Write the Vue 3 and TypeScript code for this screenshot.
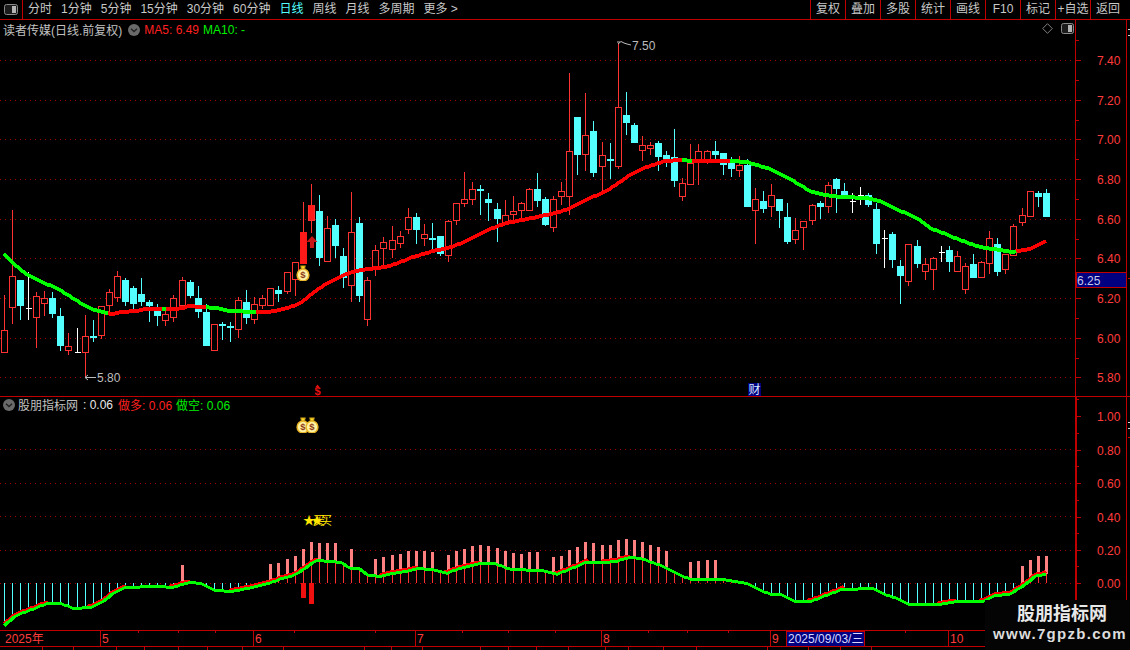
<script setup lang="ts">
type Kind = 'r' | 'c' | 'w' | 'R'
type Bar = [Kind, number, number, number, number]
type Pt = [number, number]

const raw: Bar[] = [
  ['r',295,330,352,353],['r',210,276,307,324],['c',280,280,306,320],['w',272,308,308,320],['r',292,296,317,348],
  ['r',291,298,303,316],['c',292,298,314,318],['c',308,316,346,351],['r',333,346,350,355],['w',328,352,352,353],
  ['r',315,336,352,377],['c',320,336,338,342],['r',306,306,335,339],['r',289,292,305,313],['r',271,276,297,302],
  ['c',278,280,302,306],['c',286,288,304,310],['c',278,294,302,306],['c',300,302,306,322],['c',304,311,316,326],
  ['r',309,314,320,326],['r',295,298,317,322],['r',277,280,305,307],['c',280,282,296,298],['c',286,298,312,318],
  ['c',304,312,346,346],['r',324,324,350,350],['c',322,324,326,340],['c',322,326,328,342],['r',297,300,329,338],
  ['c',290,302,318,324],['r',297,304,319,324],['r',295,298,305,309],['r',288,288,305,305],['c',286,290,294,302],
  ['r',272,272,291,294],['r',262,262,279,296],['R',202,232,264,264],['r',184,205,220,233],['c',195,211,258,266],
  ['r',216,228,261,262],['c',219,225,246,258],['c',248,256,278,288],['r',192,232,285,302],['c',217,223,296,302],
  ['r',277,280,319,326],['r',245,250,269,276],['r',237,242,248,269],['r',226,240,249,258],['r',231,236,243,248],
  ['r',208,217,229,234],['c',213,217,230,244],['r',224,234,238,246],['c',223,238,240,252],['c',236,236,254,256],
  ['r',220,221,255,262],['r',203,203,220,225],['r',172,199,203,207],['r',182,189,199,205],['c',185,189,191,215],
  ['c',193,199,203,221],['c',203,209,219,242],['r',200,215,222,225],['r',196,211,214,223],['r',202,203,210,220],
  ['r',188,189,210,211],['c',173,189,201,207],['c',197,199,225,226],['r',196,199,227,232],['r',182,191,196,205],
  ['r',73,151,196,215],['c',117,117,155,175],['r',93,135,154,171],['c',121,131,173,177],['r',142,155,166,193],
  ['c',143,159,161,179],['r',43,107,166,169],['c',92,115,123,135],['c',123,125,143,143],['r',136,145,150,161],
  ['r',142,145,148,155],['c',141,143,157,171],['c',151,155,161,167],['c',129,157,181,187],['r',178,183,196,201],
  ['r',144,163,184,184],['r',144,151,162,185],['r',150,151,160,164],['c',141,151,155,163],['c',153,153,165,175],
  ['c',157,163,169,177],['r',156,165,170,177],['c',159,165,207,207],['r',188,199,210,244],['c',191,201,209,213],
  ['r',184,195,206,217],['c',199,199,211,228],['c',203,217,242,244],['r',218,230,239,244],['r',221,221,227,250],
  ['r',204,205,220,225],['c',201,203,207,219],['r',182,185,206,213],['c',178,179,189,213],['c',183,191,197,199],
  ['w',193,201,201,213],['w',187,195,195,205],['c',193,195,205,207],['c',203,209,244,254],['w',230,238,238,268],
  ['c',232,234,260,268],['c',260,266,276,304],['r',244,244,281,286],['c',240,246,264,268],['r',258,264,271,280],
  ['r',257,258,269,290],['w',246,252,252,262],['c',246,250,262,272],['r',251,256,271,271],['r',263,266,289,294],
  ['c',254,264,278,278],['r',261,262,277,277],['r',231,238,263,274],['c',238,244,272,276],['r',254,254,269,274],
  ['r',224,226,255,255],['r',208,215,222,226],['r',191,191,216,217],['c',191,193,197,207],['c',189,193,217,217],
]

const center = (n: number): number => Math.floor(4.33 + 8.077 * n) + 0.5

const candles = raw.map((b, n) => {
  const [kind, hi, top, bot, lo] = b
  return { n, kind, hi, top, bot, lo, x: center(n) }
})

const maPts: Pt[] = [
  [4,254],[12,262],[20,269],[28,275],[36,279],[44,283],[52,286],[60,290],[68,295],[76,300],[84,305],[92,309],[100,311],
  [108,313],[112,314],[121,312],[137,311],[145,309],[173,309],[183,308],[189,306],[203,307],[217,308],[230,311],[255,312],
  [267,312],[280,310],[293,306],[303,301],[313,293],[327,283],[343,275],[360,270],[370,269],[390,266],[413,257],[433,251],
  [448,248],[467,241],[487,230],[507,223],[537,217],[560,212],[573,207],[587,199],[603,193],[617,184],[630,175],[647,167],
  [665,161],[682,160],[692,161],[730,161],[747,162],[767,168],[787,177],[800,185],[810,191],[820,194],[833,196],[843,197],
  [867,198],[883,202],[893,207],[903,212],[917,218],[930,228],[943,233],[960,240],[980,247],[993,249],[1013,252],[1017,251],
  [1030,249],[1047,241],
]

const subPts: Pt[] = [
  [4,626],[13,618],[20,614],[33,609],[48,603],[60,603],[73,608],[92,607],[103,602],[113,593],[125,587],[157,586],[173,587],
  [190,582],[200,583],[215,590],[233,591],[253,587],[270,583],[283,578],[295,575],[317,560],[340,562],[350,568],[358,568],
  [368,575],[382,576],[393,573],[407,571],[418,568],[430,569],[447,573],[460,568],[480,563],[493,563],[510,569],[540,570],
  [557,574],[570,569],[587,562],[603,562],[617,561],[630,557],[640,558],[660,565],[680,575],[690,579],[723,579],[740,582],
  [747,583],[757,589],[770,594],[780,594],[795,601],[812,601],[827,595],[843,589],[873,588],[887,595],[897,598],[907,604],
  [940,604],[957,601],[983,601],[997,595],[1010,594],[1023,586],[1037,575],[1047,574],
]

function yAt(pts: Pt[], x: number): number {
  if (x <= pts[0][0]) return pts[0][1]
  for (let i = 1; i < pts.length; i++) {
    if (x <= pts[i][0]) {
      const [x0, y0] = pts[i - 1]
      const [x1, y1] = pts[i]
      return y0 + ((y1 - y0) * (x - x0)) / (x1 - x0)
    }
  }
  return pts[pts.length - 1][1]
}

function sample(pts: Pt[], from: number, to: number, shift?: (x: number) => number): string {
  const out: string[] = []
  for (let x = from; x <= to; x += 2) {
    out.push(`${x},${Math.round(yAt(pts, x) + (shift ? shift(x) : 0))}`)
  }
  return out.join(' ')
}

const maRed = sample(maPts, 4, 1047)
const maGreen = [[4, 108], [162, 166], [206, 256], [682, 692], [730, 1016]].map(([a, b]) => sample(maPts, a, b))

const subGreen = sample(subPts, 4, 1047)
const subRed = sample(subPts, 4, 1047, (x) => (yAt(subPts, x + 3) < yAt(subPts, x) - 0.2 ? -2 : 0))

const baseY = 583
const stems = candles.map((c) => {
  const y = Math.round(yAt(subPts, c.x))
  return { x: c.x, y, up: y < baseY }
})

const pinkTop: Record<number, number> = {
  22:565,33:564,34:563,35:559,36:556,37:549,38:542,39:543,40:543,41:543,43:549,46:559,47:557,48:555,49:554,50:551,51:551,52:551,
  53:552,55:555,56:551,57:549,58:546,59:545,60:546,61:548,62:551,63:553,64:554,65:552,66:552,68:557,69:556,70:550,71:547,72:542,
  73:543,74:545,75:545,76:540,77:539,78:540,79:542,80:545,81:547,82:551,85:562,86:561,87:560,88:560,126:566,127:560,128:556,129:556,
}
const pinks = Object.entries(pinkTop).map(([n, top]) => {
  const x = center(Number(n))
  return { x, top, h: Math.max(Math.round(yAt(subPts, x)) - top, Number(n) === 22 ? 18 : 2) }
})

const mainGrid = [60, 100, 139, 179, 219, 258, 298, 338, 377]
const subGrid = [449, 483, 516, 550, 583]
const mainLabels = [
  { y: 60, t: '7.40' }, { y: 100, t: '7.20' }, { y: 139, t: '7.00' }, { y: 179, t: '6.80' }, { y: 219, t: '6.60' },
  { y: 258, t: '6.40' }, { y: 298, t: '6.20' }, { y: 338, t: '6.00' }, { y: 377, t: '5.80' },
]
const subLabels = [
  { y: 416, t: '1.00' }, { y: 450, t: '0.80' }, { y: 483, t: '0.60' }, { y: 517, t: '0.40' }, { y: 550, t: '0.20' }, { y: 583, t: '0.00' },
]
const mainMinor = [40, 80, 120, 159, 199, 239, 278, 318, 358]
const subMinor = [399, 433, 466, 500, 533, 566, 600, 616]

const monthLines = [
  { x: 100, t: '5' }, { x: 253, t: '6' }, { x: 415, t: '7' }, { x: 601, t: '8' }, { x: 770, t: '9' }, { x: 948, t: '10' },
]
const timeTicks = [138, 178, 215, 294, 375, 462, 508, 555, 648, 687, 728, 905]
const footTicks = [42, 73, 116, 144, 178, 207, 242, 283, 364, 391, 422, 480, 508, 536, 568, 605, 628, 663, 696, 767, 808, 840, 871]

const tabs = [
  { t: '分时' }, { t: '1分钟' }, { t: '5分钟' }, { t: '15分钟' }, { t: '30分钟' }, { t: '60分钟' },
  { t: '日线', on: true }, { t: '周线' }, { t: '月线' }, { t: '多周期' }, { t: '更多 >' },
]
const actions = ['复权', '叠加', '多股', '统计', '画线', 'F10', '标记', '+自选', '返回']
</script>

<template>
  <div class="screen">
    <svg class="defs" width="0" height="0" aria-hidden="true">
      <symbol id="bag" viewBox="0 0 14 16">
        <path d="M4.5 .8h5L8.6 4h-3.200z" fill="#ffd820" stroke="#8c6c14" stroke-width=".8" />
        <circle cx="7" cy="10" r="5.900" fill="#fff2a0" stroke="#e8b428" stroke-width="1.500" />
        <text x="7" y="13.400" class="bag-sign">$</text>
      </symbol>
    </svg>

    <header class="toolbar">
      <div class="layout-btn">
        <svg width="14" height="11" viewBox="0 0 14 11">
          <rect x=".5" y=".5" width="13" height="10" rx="2" fill="#1c1c1c" stroke="#8a8a8a" />
          <rect x="8" y="2" width="4" height="7" fill="#b4b4b4" />
        </svg>
      </div>
      <nav class="tabs">
        <span v-for="tab in tabs" :key="tab.t" class="tab" :class="{ active: tab.on }">{{ tab.t }}</span>
      </nav>
      <div class="actions">
        <span v-for="a in actions" :key="a" class="action">{{ a }}</span>
      </div>
    </header>

    <section class="pane pane-main">
      <div class="legend">
        <span class="legend-title">读者传媒(日线.前复权)</span>
        <svg class="chev" width="12" height="12" viewBox="0 0 12 12">
          <circle cx="6" cy="6" r="6" fill="#6a6a6a" />
          <path d="M3 4.800 6 7.600 9 4.800" fill="none" stroke="#222" stroke-width="1.400" />
        </svg>
        <span class="red">MA5: 6.49</span>
        <span class="green">MA10: -</span>
      </div>
      <div class="corner-tools">
        <svg width="11" height="11" viewBox="0 0 11 11"><path d="M5.5 .7 10.300 5.500 5.500 10.300 .7 5.500z" fill="none" stroke="#808080" /></svg>
        <svg width="13" height="11" viewBox="0 0 13 11">
          <rect x=".5" y=".5" width="12" height="10" rx="2" fill="#1c1c1c" stroke="#8a8a8a" />
          <rect x="7" y="2" width="4" height="7" fill="#b4b4b4" />
        </svg>
      </div>

      <svg class="plot" width="1075" height="376" viewBox="0 20 1075 376">
        <line v-for="y in mainGrid" :key="y" x1="0" x2="1075" :y1="y + 0.5" :y2="y + 0.5" class="grid" />
        <g v-for="c in candles" :key="c.n">
          <template v-if="c.kind === 'r'">
            <line :x1="c.x" :x2="c.x" :y1="c.hi" :y2="c.top" class="wick-red" />
            <line :x1="c.x" :x2="c.x" :y1="c.bot" :y2="c.lo" class="wick-red" />
            <rect :x="c.x - 3" :y="c.top + 0.5" width="6" :height="c.bot - c.top" class="body-red" />
          </template>
          <template v-else-if="c.kind === 'R'">
            <line :x1="c.x" :x2="c.x" :y1="c.hi" :y2="c.lo" class="wick-red" />
            <rect :x="c.x - 3.5" :y="c.top" width="7" :height="c.bot - c.top" class="fill-red" />
          </template>
          <template v-else-if="c.kind === 'c'">
            <line :x1="c.x" :x2="c.x" :y1="c.hi" :y2="c.lo" class="wick-cyan" />
            <rect :x="c.x - 3.5" :y="c.top" width="7" :height="Math.max(c.bot - c.top, 2)" class="fill-cyan" />
          </template>
          <template v-else>
            <line :x1="c.x" :x2="c.x" :y1="c.hi" :y2="c.lo" class="wick-white" />
            <line :x1="c.x - 3" :x2="c.x + 3" :y1="c.top + 0.5" :y2="c.top + 0.5" class="wick-white" />
          </template>
        </g>
        <rect x="309" y="205" width="5" height="15" class="fill-red" />
        <polyline :points="maRed" class="ma ma-red" />
        <polyline v-for="(p, i) in maGreen" :key="i" :points="p" class="ma ma-green" />

        <path d="M312 236l5.500 6h-3.500v6h-4v-6h-3.500z" fill="#c81414" />
        <use href="#bag" x="296" y="265" width="14" height="16" />

        <path d="M619 42h1m-3 0h2M618 44l3-2.500 3 1.500 3 1 4 1" fill="none" stroke="#bcbcbc" />
        <text x="632" y="50" class="peak">7.50</text>
        <path d="M96 377.500H85l3-2.500M85 377.500l3 2.500" fill="none" stroke="#bcbcbc" />
        <text x="97" y="382" class="peak">5.80</text>

        <path d="M317.500 384.500l2 2.500h-4z" fill="#e01010" />
        <text x="317.500" y="394.500" class="dollar">$</text>
        <rect x="748" y="383" width="13" height="13" fill="#000080" />
        <text x="754.500" y="394" class="cai">财</text>
      </svg>

      <svg class="axis" width="51" height="376" viewBox="1075 20 51 376">
        <line x1="1075.500" x2="1075.500" y1="20" y2="396" class="axis-line" />
        <g v-for="m in mainLabels" :key="m.t">
          <line x1="1076" x2="1081" :y1="m.y + 0.5" :y2="m.y + 0.5" class="axis-tick" />
          <text x="1097" :y="m.y + 4.5" class="axis-text">{{ m.t }}</text>
        </g>
        <line v-for="y in mainMinor" :key="y" x1="1076" x2="1079" :y1="y + 0.5" :y2="y + 0.5" class="axis-tick" />
        <rect x="1076" y="272.500" width="50" height="15" fill="#000080" class="price-box" />
        <text x="1077" y="285" class="price-text">6.25</text>
      </svg>
      <div class="strip">
        <i class="notch n1"></i><i class="notch n2"></i><i class="notch n3"></i>
      </div>
    </section>

    <section class="pane pane-sub">
      <div class="legend legend-sub">
        <svg class="chev-sub" width="12" height="12" viewBox="0 0 12 12">
          <circle cx="6" cy="6" r="6" fill="#6a6a6a" />
          <path d="M3 4.800 6 7.600 9 4.800" fill="none" stroke="#222" stroke-width="1.400" />
        </svg>
        <span class="legend-title">股朋指标网</span>
        <span class="white">: 0.06</span>
        <span class="red">做多: 0.06</span>
        <span class="green">做空: 0.06</span>
      </div>
      <svg class="plot" width="1075" height="233" viewBox="0 397 1075 233">
        <line v-for="y in subGrid" :key="y" x1="0" x2="1075" :y1="y + 0.5" :y2="y + 0.5" class="grid" />
        <line v-for="s in stems" :key="s.x" :x1="s.x" :x2="s.x" :y1="baseY" :y2="s.y" :class="s.up ? 'stem-red' : 'stem-cyan'" />
        <rect v-for="p in pinks" :key="p.x" :x="p.x - 1.5" :y="p.top" width="3" :height="p.h" class="fill-pink" />
        <rect x="301" y="583" width="5" height="15" class="fill-solid" />
        <rect x="309" y="583" width="5" height="21" class="fill-solid" />
        <polyline :points="subRed" class="sub-line sub-red" />
        <polyline :points="subGreen" class="sub-line sub-green" />
        <use href="#bag" x="296" y="417" width="14" height="16" />
        <use href="#bag" x="305" y="417" width="14" height="16" />
        <text x="303" y="525" class="signal">★</text>
        <text x="311" y="525" class="signal">★</text>
        <text x="313" y="525" class="signal">买</text>
        <text x="320" y="525" class="signal">买</text>
      </svg>
      <svg class="axis" width="51" height="233" viewBox="1075 397 51 233">
        <line x1="1076" x2="1076" y1="397" y2="630" class="axis-line-bold" />
        <g v-for="m in subLabels" :key="m.t">
          <line x1="1077" x2="1081" :y1="m.y + 0.5" :y2="m.y + 0.5" class="axis-tick" />
          <text x="1097" :y="m.y + 4.5" class="axis-text">{{ m.t }}</text>
        </g>
        <line v-for="y in subMinor" :key="y" x1="1077" x2="1079" :y1="y + 0.5" :y2="y + 0.5" class="axis-tick" />
      </svg>
      <div class="strip">
        <i class="notch n4"></i><i class="notch n5"></i><i class="notch n6"></i>
      </div>
    </section>

    <svg class="timebar" width="1130" height="20" viewBox="0 630 1130 20">
      <line x1="0" x2="1130" y1="630.500" y2="630.500" class="axis-tick" />
      <line x1="0" x2="1130" y1="646.500" y2="646.500" class="axis-tick" />
      <text x="5" y="643" class="time-text">2025年</text>
      <g v-for="m in monthLines" :key="m.t">
        <line :x1="m.x + 0.5" :x2="m.x + 0.5" y1="631" y2="647" class="axis-tick" />
        <text :x="m.x + 2" y="643" class="time-text">{{ m.t }}</text>
      </g>
      <line v-for="t in timeTicks" :key="t" :x1="t + 0.5" :x2="t + 0.5" y1="631" y2="633" class="axis-tick" />
      <line v-for="t in footTicks" :key="t" :x1="t + 0.5" :x2="t + 0.5" y1="647" y2="650" class="axis-tick" />
      <rect x="786.500" y="631" width="78" height="15.500" fill="#000080" class="date-box" />
      <text x="788" y="643" class="date-text">2025/09/03/三</text>
    </svg>

    <aside class="watermark">
      <strong class="wm-title">股朋指标网</strong>
      <span class="wm-url">www.7gpzb.com</span>
    </aside>
  </div>
</template>

<style scoped>
.screen {
  position: relative;
  width: 1130px;
  height: 650px;
  overflow: hidden;
  background: #000;
  color: #c8c8c8;
  font-family: "Liberation Sans", "Noto Sans CJK SC", sans-serif;
  font-size: 12px;
}
.defs { position: absolute; }
.toolbar {
  display: flex;
  align-items: center;
  height: 19px;
  border-bottom: 1px solid #c00000;
  box-sizing: content-box;
}
.layout-btn {
  width: 23px;
  height: 19px;
  display: flex;
  align-items: center;
  justify-content: center;
  border-right: 1px solid #c00000;
  box-sizing: border-box;
  flex: none;
}
.tabs {
  display: flex;
  gap: 9px;
  padding-left: 5px;
  white-space: nowrap;
  color: #c8c8c8;
}
.tab { line-height: 19px; }
.active { color: #54ffff; }
.actions {
  display: flex;
  margin-left: auto;
  margin-right: 5px;
  height: 19px;
}
.action {
  width: 35px;
  text-align: center;
  line-height: 19px;
  border-left: 1px solid #c00000;
  box-sizing: border-box;
  white-space: nowrap;
}
.pane {
  position: relative;
  display: flex;
  border-bottom: 1px solid #c00000;
}
.pane-main { height: 376px; }
.pane-sub { height: 233px; }
.plot, .axis { display: block; flex: none; }
.strip {
  position: relative;
  flex: 1;
  border-left: 1px solid #c00000;
}
.notch {
  position: absolute;
  left: 1px;
  width: 3px;
  height: 1px;
  background: #d8d8d8;
}
.n1 { top: 9px; }
.n2 { top: 15px; }
.n3 { top: 258px; background: #c00000; }
.n4 { top: 25px; }
.n5 { top: 31px; }
.n6 { top: 40px; background: #c00000; }
.legend {
  position: absolute;
  left: 3px;
  top: 2px;
  display: flex;
  align-items: center;
  height: 15px;
  white-space: nowrap;
}
.legend-title { color: #c0c0c0; }
.chev { margin: 0 4px 0 6px; }
.legend .green { margin-left: 4px; }
.legend-sub { top: 0; }
.chev-sub { margin-right: 3px; }
.white { color: #e8e8e8; margin: 0 5px; }
.red { color: #ff2020; }
.green { color: #00f000; }
.corner-tools {
  position: absolute;
  left: 1042px;
  top: 3px;
  display: flex;
  align-items: center;
  gap: 8px;
}
.grid { stroke: #a00000; stroke-dasharray: 1 4; shape-rendering: crispEdges; }
.wick-red, .wick-cyan, .wick-white, .stem-red, .stem-cyan { stroke-width: 1; shape-rendering: crispEdges; }
.wick-red, .stem-red { stroke: #ff3232; }
.wick-cyan, .stem-cyan { stroke: #54ffff; }
.wick-white { stroke: #fff; }
.body-red { fill: #000; stroke: #ff3232; stroke-width: 1; shape-rendering: crispEdges; }
.fill-red { fill: #ff1a1a; shape-rendering: crispEdges; }
.fill-cyan { fill: #54ffff; shape-rendering: crispEdges; }
.fill-pink { fill: #ff8080; shape-rendering: crispEdges; }
.fill-solid { fill: #f01010; shape-rendering: crispEdges; }
.ma { fill: none; stroke-width: 3.6; shape-rendering: crispEdges; stroke-linejoin: round; }
.ma-red { stroke: #ff0000; }
.ma-green { stroke: #00ff00; }
.sub-line { fill: none; stroke-width: 3; shape-rendering: crispEdges; }
.sub-red { stroke: #ff0000; }
.sub-green { stroke: #00ff00; }
.peak { fill: #bcbcbc; font-size: 12px; }
.dollar { fill: #e81010; font-size: 11px; font-weight: 700; text-anchor: middle; }
.cai { fill: #d8e8ff; font-size: 12px; text-anchor: middle; }
.bag-sign { fill: #8c3a18; font-size: 9.5px; font-weight: 700; text-anchor: middle; }
.signal { fill: #ffe600; font-size: 12px; }
.axis-line { stroke: #c00000; stroke-width: 1; shape-rendering: crispEdges; }
.axis-line-bold { stroke: #c00000; stroke-width: 2; shape-rendering: crispEdges; }
.axis-tick { stroke: #c00000; stroke-width: 1; shape-rendering: crispEdges; }
.axis-text { fill: #ff3c3c; font-size: 12px; }
.price-box, .date-box { stroke: #c00000; shape-rendering: crispEdges; }
.price-text { fill: #c8c8e8; font-size: 12px; }
.time-text { fill: #ff3c3c; font-size: 12px; }
.date-text { fill: #d8d8ff; font-size: 12px; }
.timebar {
  display: block;
  position: absolute;
  left: 0;
  top: 630px;
}
.watermark {
  position: absolute;
  left: 985px;
  top: 600px;
  width: 145px;
  height: 50px;
  box-sizing: border-box;
  padding-left: 5px;
  background: #040404;
  display: flex;
  flex-direction: column;
  align-items: center;
  color: #e8e8e8;
}
.wm-title {
  font-size: 18px;
  line-height: 22px;
  margin-top: 3px;
  margin-left: 4px;
}
.wm-url {
  font-size: 15px;
  font-weight: 700;
  line-height: 18px;
  letter-spacing: 1.3px;
  color: #dcdcdc;
}
</style>
